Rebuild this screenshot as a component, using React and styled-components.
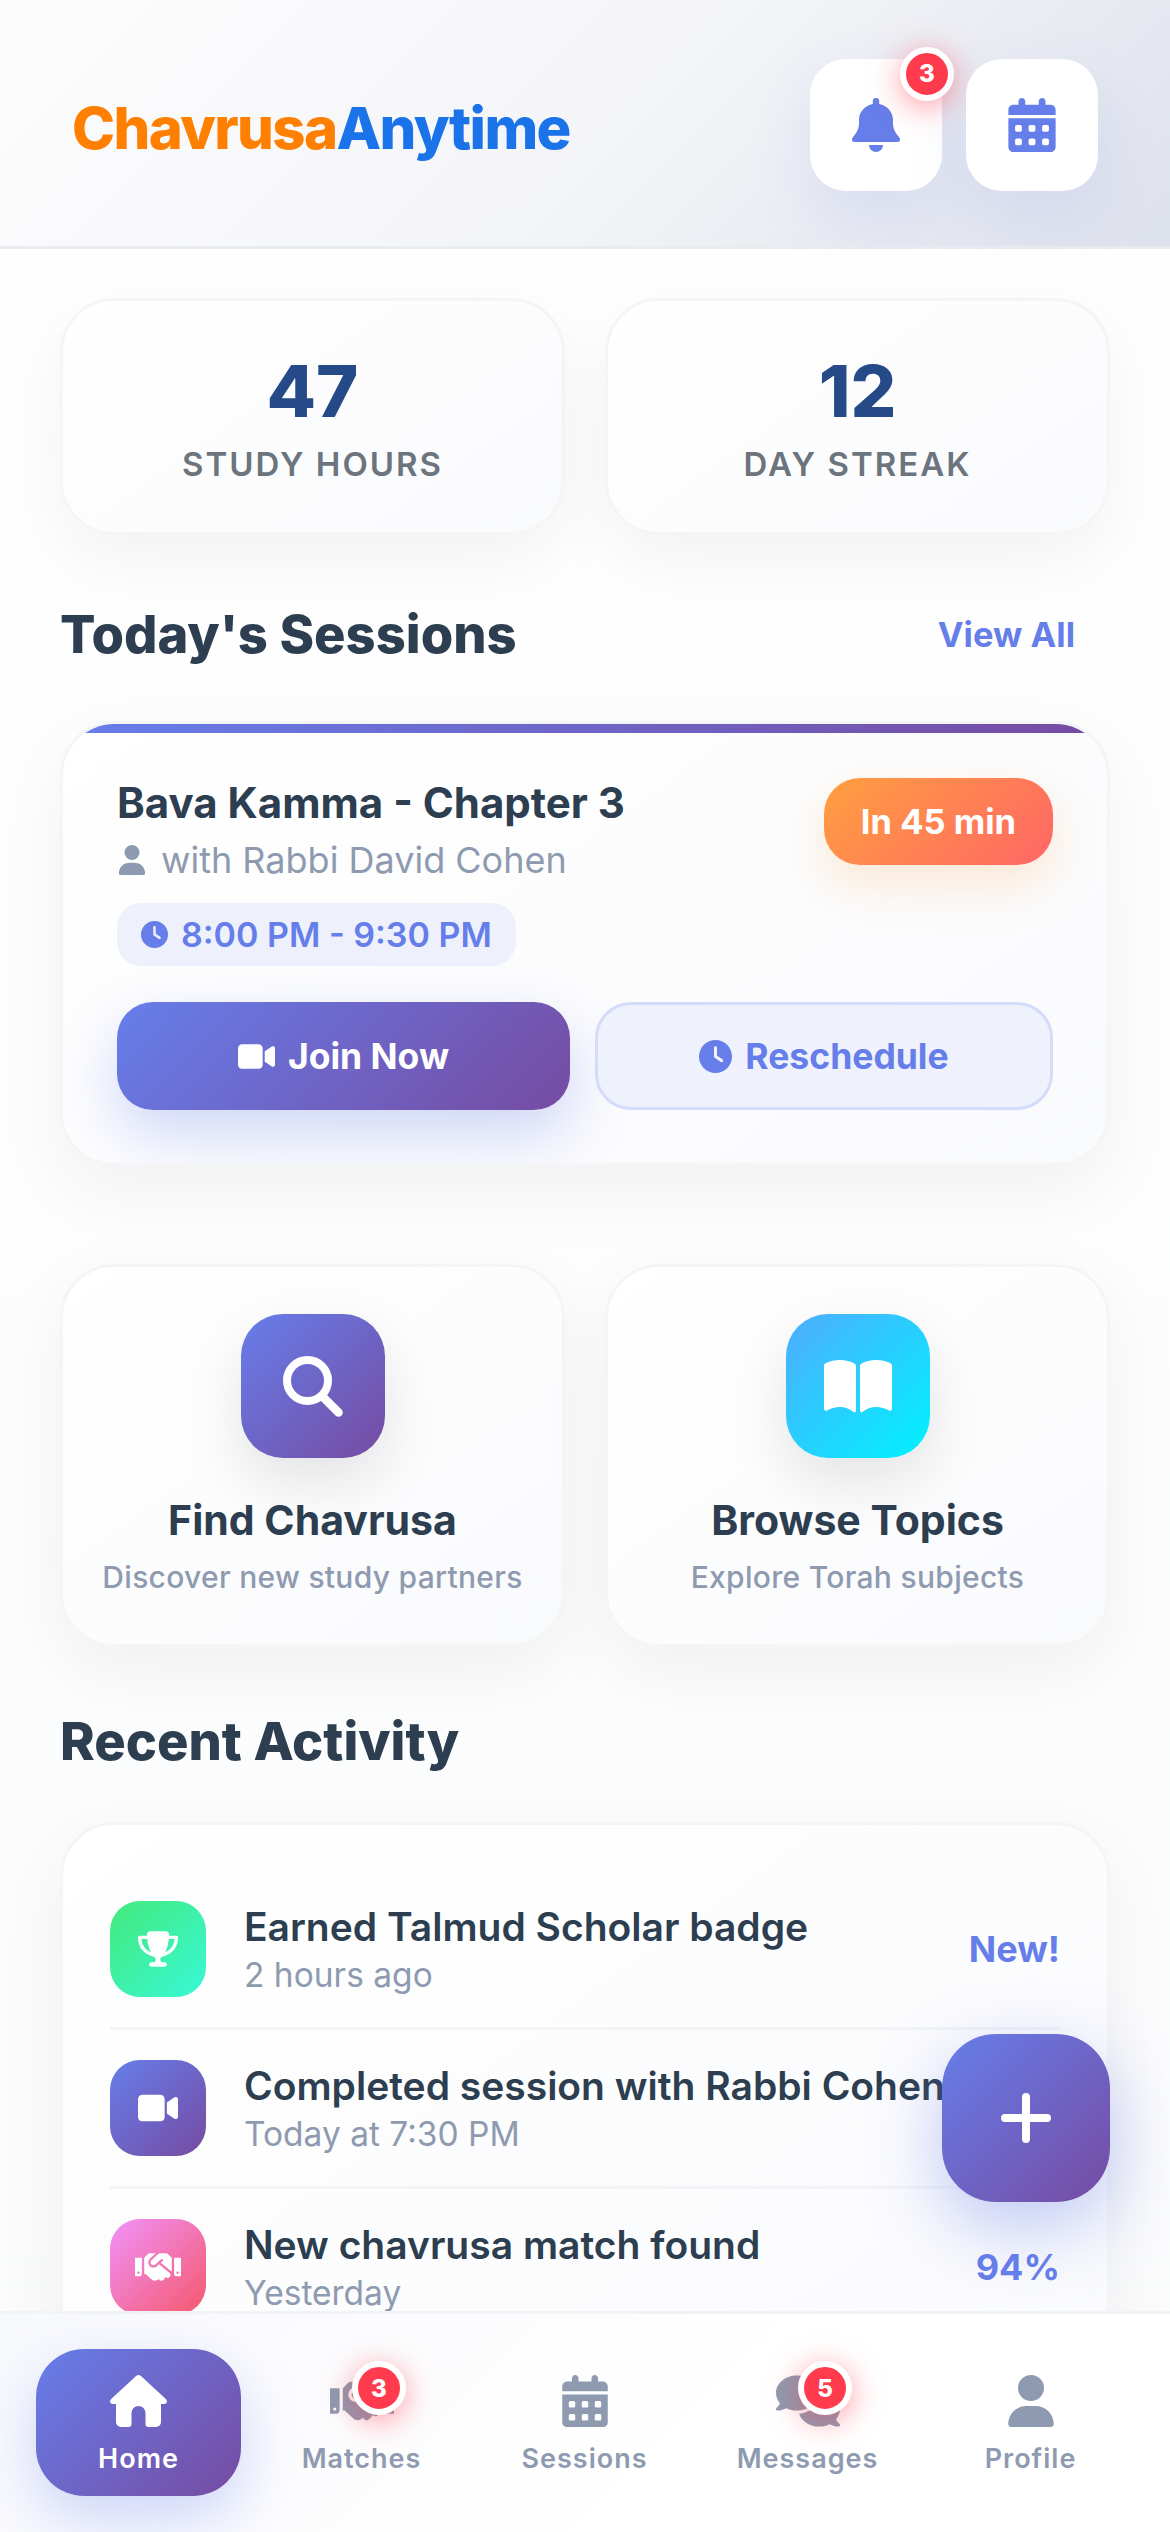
import React from "react";
import styled, { createGlobalStyle } from "styled-components";
import { FaHandshake } from "react-icons/fa";
import {
  FaCalendarDays,
  FaClock,
  FaComments,
  FaTrophy,
  FaUser,
  FaVideo,
} from "react-icons/fa6";

const brandGradient = "linear-gradient(135deg, #667eea 0%, #764ba2 100%)";

const GlobalStyle = createGlobalStyle`
  html, body {
    margin: 0;
    padding: 0;
    background: #fff;
  }
  body {
    font-family: Inter, "Noto Sans", sans-serif;
    overflow: hidden;
  }
  * {
    box-sizing: border-box;
  }
`;

const BellIcon = () => (
  <svg width="48" height="54" viewBox="0 0 48 54" fill="currentColor">
    <path d="M24 0a3.2 3.2 0 0 1 3.2 3.2V6C35 7.5 41 14 41 22v3c0 6 2.5 10 6 14 2 3 .8 5-1.5 5h-43C.2 44-1 42 1 39c3.500-4 6-8 6-14v-3C7 14 13 7.500 20.800 6V3.200A3.200 3.200 0 0 1 24 0Z" />
    <path d="M17 47h14a7 7 0 0 1-14 0Z" />
  </svg>
);

const SearchIcon = () => (
  <svg width="60" height="61" viewBox="0 0 60 61" fill="none" stroke="currentColor">
    <circle cx="24.500" cy="24.500" r="20.500" strokeWidth="8" />
    <path d="M39.500 40.500 55.500 56.500" strokeWidth="8.500" strokeLinecap="round" />
  </svg>
);

const BookIcon = () => (
  <svg width="68" height="53" viewBox="0 0 68 53" fill="currentColor">
    <path d="M0 6c0-1.500.6-2.400 2-3.100C6 1 11 0 16 0c5.500 0 10.500 1.400 14.500 3.500 1 .6 1.500 1.500 1.500 2.800V50c0 2.200-1.300 2.900-2.800 1.700C25.500 48.800 21 47 16 47c-4.800 0-9 1.500-13 3.400-1.800.8-3 .2-3-1.800Z" />
    <path d="M68 6c0-1.500-.6-2.400-2-3.100C62 1 57 0 52 0c-5.500 0-10.500 1.400-14.500 3.500-1 .6-1.500 1.500-1.500 2.800V50c0 2.200 1.300 2.900 2.800 1.700C42.500 48.800 47 47 52 47c4.800 0 9 1.500 13 3.400 1.800.8 3 .2 3-1.800Z" />
  </svg>
);

const HomeIcon = () => (
  <svg width="57" height="52" viewBox="0 0 57 52" fill="currentColor">
    <path d="M25.800 1.200a4 4 0 0 1 5.400 0L55.800 24c2.200 2.200 1 5-1.800 5H51v18a5 5 0 0 1-5 5h-7.500a3 3 0 0 1-3-3V38a7 7 0 0 0-14 0v11a3 3 0 0 1-3 3H11a5 5 0 0 1-5-5V29H3c-2.800 0-4-2.800-1.800-5Z" />
  </svg>
);

const PlusIcon = () => (
  <svg width="50" height="50" viewBox="0 0 50 50" stroke="currentColor" strokeWidth="8" strokeLinecap="round">
    <path d="M25 4v42M4 25h42" />
  </svg>
);

const Screen = styled.div`
  position: relative;
  width: 1170px;
  height: 2532px;
  overflow: hidden;
  background: linear-gradient(180deg, #ffffff 0%, #fafbfc 100%);
`;

const Header = styled.header`
  display: flex;
  align-items: center;
  justify-content: space-between;
  height: 249px;
  padding: 60px 72px 57px;
  background: linear-gradient(135deg, #fdfdfe 0%, #f3f4f7 55%, #dde1ec 100%);
  border-bottom: 3px solid #e9ecef;
`;

const Logo = styled.div`
  padding-top: 6px;
  font-size: 58px;
  font-weight: 800;
  letter-spacing: -1.6px;
  color: #1a73e8;

  span {
    color: #ff7f00;
  }
`;

const HeaderActions = styled.div`
  display: flex;
  gap: 24px;
`;

const HeaderButton = styled.div`
  position: relative;
  display: flex;
  align-items: center;
  justify-content: center;
  width: 132px;
  height: 132px;
  border-radius: 36px;
  background: #fff;
  color: #667eea;
  font-size: 54px;
  box-shadow: 0 24px 60px rgba(102, 126, 234, 0.13);
`;

const CountBadge = styled.span`
  position: absolute;
  top: ${(props) => props.$top}px;
  right: ${(props) => props.$right}px;
  display: flex;
  align-items: center;
  justify-content: center;
  width: 54px;
  height: 54px;
  border: 6px solid #fff;
  border-radius: 50%;
  background: #ff3b4d;
  color: #fff;
  font-size: 24px;
  font-weight: 800;
  box-shadow: 0 6px 30px rgba(255, 59, 77, 0.5);
`;

const Main = styled.main`
  padding: 49px 60px 0;
`;

const CardGrid = styled.div`
  display: grid;
  grid-template-columns: 1fr 1fr;
  gap: 40px;
`;

const Card = styled.div`
  border: 3px solid #f4f5f6;
  background: linear-gradient(145deg, #ffffff 0%, #f9fafc 100%);
  box-shadow: 0 24px 72px rgba(0, 0, 0, 0.05);
`;

const StatCard = styled(Card)`
  padding: 47px 20px;
  border-radius: 54px;
  text-align: center;
`;

const StatNumber = styled.div`
  margin-bottom: 9px;
  font-size: 72px;
  line-height: 86px;
  font-weight: 800;
  color: #264a87;
`;

const StatLabel = styled.div`
  font-size: 33px;
  line-height: 42px;
  font-weight: 600;
  letter-spacing: 2px;
  color: #6c757d;
`;

const SectionHeader = styled.div`
  display: flex;
  align-items: center;
  justify-content: space-between;
  margin: ${(props) => props.$top}px 0 ${(props) => props.$bottom}px;
  padding-right: 35px;
`;

const SectionTitle = styled.h2`
  margin: 0;
  font-size: 52.5px;
  line-height: 64px;
  font-weight: 800;
  color: #2c3e50;
`;

const ViewAll = styled.a`
  font-size: 34.5px;
  font-weight: 700;
  color: #667eea;
`;

const SessionCard = styled(Card)`
  position: relative;
  overflow: hidden;
  padding: 54px 54px 53px;
  border-radius: 54px;

  &::before {
    content: "";
    position: absolute;
    top: 0;
    left: 0;
    right: 0;
    height: 9px;
    background: linear-gradient(90deg, #667eea 0%, #764ba2 100%);
  }
`;

const SessionTop = styled.div`
  display: flex;
  align-items: flex-start;
  justify-content: space-between;
  margin-bottom: 36px;
`;

const SessionTitle = styled.div`
  margin-bottom: 9px;
  font-size: 42px;
  line-height: 50px;
  font-weight: 700;
  color: #2c3e50;
`;

const Partner = styled.div`
  display: flex;
  align-items: center;
  gap: 14px;
  margin-bottom: 20px;
  font-size: 36px;
  line-height: 46px;
  color: #8e9aaf;
`;

const TimePill = styled.div`
  display: inline-flex;
  align-items: center;
  gap: 13px;
  height: 63px;
  padding: 0 24px;
  border-radius: 24px;
  background: #eef1fc;
  font-size: 34px;
  font-weight: 600;
  color: #667eea;
`;

const TimeBadge = styled.div`
  padding: 0 37px;
  height: 87px;
  line-height: 87px;
  border-radius: 36px;
  background: linear-gradient(135deg, #ff9f3f 0%, #ff6666 100%);
  color: #fff;
  font-size: 34.5px;
  font-weight: 700;
  box-shadow: 0 18px 48px rgba(255, 159, 63, 0.22);
`;

const ButtonRow = styled.div`
  display: grid;
  grid-template-columns: 453px 458px;
  gap: 25px;
`;

const ActionButton = styled.div`
  display: flex;
  align-items: center;
  justify-content: center;
  gap: 13px;
  height: 108px;
  border-radius: 36px;
  font-size: 35.5px;
  font-weight: 700;
  border: ${(props) => (props.$primary ? "none" : "3px solid #d3dcf8")};
  background: ${(props) => (props.$primary ? brandGradient : "#eff2fc")};
  color: ${(props) => (props.$primary ? "#fff" : "#667eea")};
  box-shadow: ${(props) =>
    props.$primary ? "0 24px 60px rgba(102, 126, 234, 0.3)" : "none"};
`;

const QuickGrid = styled(CardGrid)`
  margin-top: 98px;
`;

const QuickCard = styled(Card)`
  display: flex;
  flex-direction: column;
  align-items: center;
  padding: 47px 20px;
  border-radius: 54px;
`;

const QuickIcon = styled.div`
  display: flex;
  align-items: center;
  justify-content: center;
  width: 144px;
  height: 144px;
  margin-bottom: 37px;
  border-radius: 42px;
  background: ${(props) => props.$background};
  color: #fff;
  box-shadow: 0 24px 60px rgba(0, 0, 0, 0.1);
`;

const QuickTitle = styled.div`
  margin-bottom: 12px;
  font-size: 41px;
  line-height: 50px;
  font-weight: 700;
  color: #2c3e50;
`;

const QuickSub = styled.div`
  font-size: 30px;
  line-height: 40px;
  font-weight: 500;
  letter-spacing: 0.3px;
  color: #8e9aaf;
`;

const ActivityCard = styled(Card)`
  padding: 46px 47px;
  border-radius: 54px;
`;

const ActivityRow = styled.div`
  display: flex;
  align-items: center;
  gap: 38px;
  padding: 30px 0;
  border-bottom: 3px solid ${(props) => (props.$last ? "transparent" : "#f2f4f6")};
`;

const ActivityIcon = styled.div`
  flex: none;
  display: flex;
  align-items: center;
  justify-content: center;
  width: 96px;
  height: 96px;
  border-radius: 30px;
  background: ${(props) => props.$background};
  color: #fff;
`;

const ActivityText = styled.div`
  flex: 1;
  min-width: 0;
  white-space: nowrap;
`;

const ActivityTitle = styled.div`
  margin-bottom: 1px;
  font-size: 39px;
  line-height: 50px;
  font-weight: 600;
  color: #2c3e50;
`;

const ActivityTime = styled.div`
  font-size: 33.5px;
  line-height: 44px;
  color: #8e9aaf;
`;

const ActivityValue = styled.div`
  font-size: 36px;
  font-weight: 700;
  color: #667eea;
`;

const Fab = styled.div`
  position: absolute;
  left: 942px;
  top: 2034px;
  display: flex;
  align-items: center;
  justify-content: center;
  width: 168px;
  height: 168px;
  border-radius: 54px;
  background: ${brandGradient};
  color: #fff;
  box-shadow: 0 24px 72px rgba(102, 126, 234, 0.4);
`;

const BottomNav = styled.nav`
  position: absolute;
  left: 0;
  right: 0;
  bottom: 0;
  display: flex;
  gap: 18px;
  height: 221px;
  padding: 35px 36px 0;
  border-top: 3px solid #f1f3f5;
  background: linear-gradient(135deg, #f8f9fd 0%, #ffffff 60%);
`;

const NavItem = styled.div`
  position: relative;
  display: flex;
  flex-direction: column;
  align-items: center;
  width: 205px;
  height: 147px;
  padding-top: 26px;
  border-radius: 48px;
  background: ${(props) => (props.$active ? brandGradient : "transparent")};
  color: ${(props) => (props.$active ? "#fff" : "#8e9aaf")};
  box-shadow: ${(props) =>
    props.$active ? "0 24px 60px rgba(102, 126, 234, 0.3)" : "none"};
`;

const NavIcon = styled.span`
  display: flex;
  align-items: center;
  justify-content: center;
  height: 52px;
`;

const NavLabel = styled.span`
  margin-top: 14px;
  font-size: 27px;
  line-height: 36px;
  font-weight: 600;
  letter-spacing: 1px;
`;

const stats = [
  { value: "47", label: "STUDY HOURS" },
  { value: "12", label: "DAY STREAK" },
];

const quickActions = [
  {
    title: "Find Chavrusa",
    sub: "Discover new study partners",
    icon: <SearchIcon />,
    background: brandGradient,
  },
  {
    title: "Browse Topics",
    sub: "Explore Torah subjects",
    icon: <BookIcon />,
    background: "linear-gradient(135deg, #4facfe 0%, #00f2fe 100%)",
  },
];

const activities = [
  {
    title: "Earned Talmud Scholar badge",
    time: "2 hours ago",
    value: "New!",
    icon: <FaTrophy size={40} />,
    background: "linear-gradient(135deg, #43e97b 0%, #38f9d7 100%)",
  },
  {
    title: "Completed session with Rabbi Cohen",
    time: "Today at 7:30 PM",
    value: "",
    icon: <FaVideo size={40} />,
    background: brandGradient,
  },
  {
    title: "New chavrusa match found",
    time: "Yesterday",
    value: "94%",
    icon: <FaHandshake size={46} />,
    background: "linear-gradient(135deg, #f093fb 0%, #f5576c 100%)",
  },
];

const navItems = [
  { label: "Home", icon: <HomeIcon />, active: true },
  { label: "Matches", icon: <FaHandshake size={64} />, count: 3 },
  { label: "Sessions", icon: <FaCalendarDays size={52} /> },
  { label: "Messages", icon: <FaComments size={64} />, count: 5 },
  { label: "Profile", icon: <FaUser size={52} /> },
];

const App = () => {
  return (
    <Screen>
      <GlobalStyle />
      <Header>
        <Logo>
          <span>Chavrusa</span>Anytime
        </Logo>
        <HeaderActions>
          <HeaderButton>
            <BellIcon />
            <CountBadge $top={-12} $right={-12}>
              3
            </CountBadge>
          </HeaderButton>
          <HeaderButton>
            <FaCalendarDays />
          </HeaderButton>
        </HeaderActions>
      </Header>

      <Main>
        <CardGrid>
          {stats.map((stat) => (
            <StatCard key={stat.label}>
              <StatNumber>{stat.value}</StatNumber>
              <StatLabel>{stat.label}</StatLabel>
            </StatCard>
          ))}
        </CardGrid>

        <SectionHeader $top={67} $bottom={55}>
          <SectionTitle>Today's Sessions</SectionTitle>
          <ViewAll>View All</ViewAll>
        </SectionHeader>

        <SessionCard>
          <SessionTop>
            <div>
              <SessionTitle>Bava Kamma - Chapter 3</SessionTitle>
              <Partner>
                <FaUser size={30} />
                with Rabbi David Cohen
              </Partner>
              <TimePill>
                <FaClock size={27} />
                8:00 PM - 9:30 PM
              </TimePill>
            </div>
            <TimeBadge>In 45 min</TimeBadge>
          </SessionTop>
          <ButtonRow>
            <ActionButton $primary>
              <FaVideo size={37} />
              Join Now
            </ActionButton>
            <ActionButton>
              <FaClock size={33} />
              Reschedule
            </ActionButton>
          </ButtonRow>
        </SessionCard>

        <QuickGrid>
          {quickActions.map((action) => (
            <QuickCard key={action.title}>
              <QuickIcon $background={action.background}>{action.icon}</QuickIcon>
              <QuickTitle>{action.title}</QuickTitle>
              <QuickSub>{action.sub}</QuickSub>
            </QuickCard>
          ))}
        </QuickGrid>

        <SectionHeader $top={62} $bottom={49}>
          <SectionTitle>Recent Activity</SectionTitle>
        </SectionHeader>

        <ActivityCard>
          {activities.map((activity, index) => (
            <ActivityRow key={activity.title} $last={index === activities.length - 1}>
              <ActivityIcon $background={activity.background}>{activity.icon}</ActivityIcon>
              <ActivityText>
                <ActivityTitle>{activity.title}</ActivityTitle>
                <ActivityTime>{activity.time}</ActivityTime>
              </ActivityText>
              {activity.value && <ActivityValue>{activity.value}</ActivityValue>}
            </ActivityRow>
          ))}
        </ActivityCard>
      </Main>

      <Fab>
        <PlusIcon />
      </Fab>

      <BottomNav>
        {navItems.map((item) => (
          <NavItem key={item.label} $active={item.active}>
            <NavIcon>{item.icon}</NavIcon>
            {item.count && (
              <CountBadge $top={12} $right={58}>
                {item.count}
              </CountBadge>
            )}
            <NavLabel>{item.label}</NavLabel>
          </NavItem>
        ))}
      </BottomNav>
    </Screen>
  );
};

export default App;
